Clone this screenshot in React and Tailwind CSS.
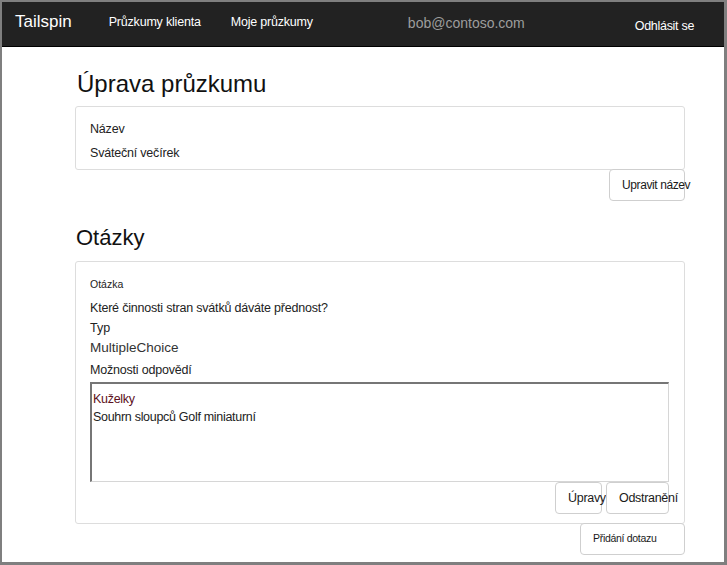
import React from "react";

const font = { fontFamily: '"Liberation Sans", Arial, sans-serif' };

function Button({ children, className = "" }) {
  return (
    <button
      className={`h-8 rounded border border-[#cfcfcf] bg-white text-[#1a1a1a] whitespace-nowrap text-left ${className}`}
    >
      {children}
    </button>
  );
}

export default function App() {
  return (
    <div
      style={font}
      className="w-[727px] h-[565px] box-border border-l-2 border-t-2 border-r-[3px] border-b-[3px] border-[#7f7f7f] bg-white overflow-hidden"
    >
      {/* navbar */}
      <nav className="h-[45px] bg-[#222222] border-b border-black flex items-start text-white">
        <span className="ml-[13px] mt-[10px] text-[17px] leading-5">Tailspin</span>
        <span className="ml-[37px] mt-[12px] text-[12.5px] leading-4 tracking-[-0.2px]">Průzkumy klienta</span>
        <span className="ml-[30px] mt-[12px] text-[12.5px] leading-4 tracking-[-0.2px]">Moje průzkumy</span>
        <span className="ml-[95px] mt-[13px] text-[14px] leading-4 text-[#9d9d9d]">bob@contoso.com</span>
        <span className="ml-[110px] mt-[16px] text-[12.5px] leading-4 tracking-[-0.3px]">Odhlásit se</span>
      </nav>

      <main className="ml-[73px] w-[610px] text-[#222]">
        <h1 className="mt-[23px] ml-[2px] text-[24px] leading-7 text-[#111]">Úprava průzkumu</h1>

        <section className="mt-2 h-16 border border-[#dddddd] rounded-[3px] px-[14px] pt-[12px] text-[12.5px] tracking-[-0.2px]">
          <div className="leading-5">Název</div>
          <div className="mt-1 leading-5">Sváteční večírek</div>
        </section>
        <div className="flex justify-end -mt-px">
          <Button className="w-[76px] text-[12px] tracking-[-0.4px] pl-[12px]">Upravit název</Button>
        </div>

        <h2 className="mt-[23px] ml-px text-[22px] leading-7 text-[#111]">Otázky</h2>

        <section className="mt-[9px] border border-[#dddddd] rounded-[3px] px-[14px] pt-[14px] pb-[9px]">
          <div className="text-[10.5px] leading-4">Otázka</div>
          <div className="mt-[6px] text-[12.5px] leading-5 tracking-[-0.2px]">Které činnosti stran svátků dáváte přednost?</div>
          <div className="text-[12.5px] leading-5">Typ</div>
          <div className="text-[13.5px] leading-5 text-[#333]">MultipleChoice</div>
          <div className="mt-[2px] text-[12.5px] leading-5 tracking-[-0.2px]">Možnosti odpovědí</div>
          <div className="mt-[2px] h-[100px] w-[579px] box-border border-t-2 border-l-2 border-r border-b border-t-[#767676] border-l-[#767676] border-r-[#d6d6d6] border-b-[#d6d6d6] pl-[1px] pt-[6px] text-[12.5px] leading-[18px] tracking-[-0.3px]">
            <div className="text-[#5c1020]">Kuželky</div>
            <div>Souhrn sloupců Golf miniaturní</div>
          </div>
          <div className="flex justify-end gap-1 pr-px">
            <Button className="w-[47px] text-[12.5px] pl-[12px] tracking-[-0.3px]">Úpravy</Button>
            <Button className="w-[63px] text-[12.5px] pl-[12px] tracking-[-0.3px]">Odstranění</Button>
          </div>
        </section>
        <div className="flex justify-end -mt-px">
          <Button className="w-[105px] text-[10.5px] tracking-[-0.3px] pl-[12px]">Přidání dotazu</Button>
        </div>
      </main>
    </div>
  );
}
